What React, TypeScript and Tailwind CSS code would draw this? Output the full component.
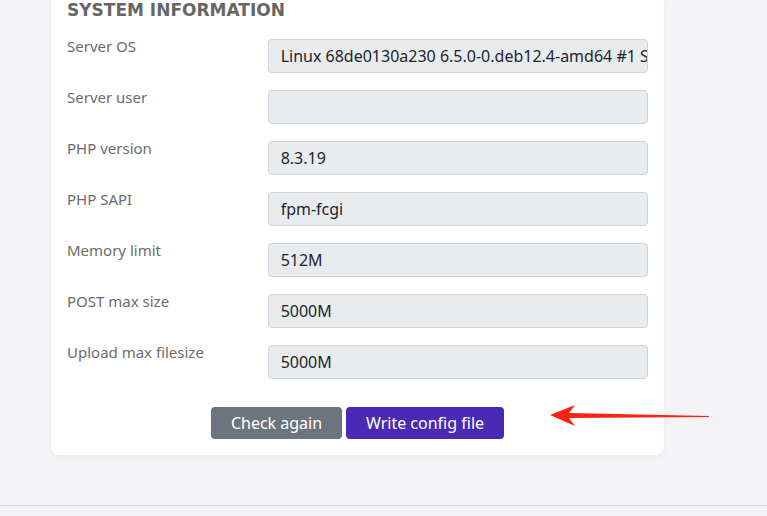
import React from 'react';

const rows: { label: string; value: string }[] = [
  { label: 'Server OS', value: 'Linux 68de0130a230 6.5.0-0.deb12.4-amd64 #1 SMP PREEMPT_DYNAMIC Debian' },
  { label: 'Server user', value: '' },
  { label: 'PHP version', value: '8.3.19' },
  { label: 'PHP SAPI', value: 'fpm-fcgi' },
  { label: 'Memory limit', value: '512M' },
  { label: 'POST max size', value: '5000M' },
  { label: 'Upload max filesize', value: '5000M' },
];

const App: React.FC = () => {
  return (
    <div className="h-[516px] w-[767px] overflow-hidden bg-[#f4f3f8] font-['Noto_Sans',sans-serif]">
      <div className="ml-[51px] w-[613px] rounded-b-lg bg-white px-4 pb-4 shadow-[0_2px_6px_rgba(0,0,0,0.04)]">
        <h2 className="font-['DejaVu_Sans',sans-serif] text-[17px] font-bold leading-[20px] text-[#666] uppercase">
          System information
        </h2>

        {/* Info rows */}
        <div className="mt-[19px] flex flex-col gap-[17px]">
          {rows.map((r) => (
            <div key={r.label} className="flex items-start">
              <div className="-mt-[3px] w-[201px] text-[15px] leading-[20px] text-[#6c6c6c]">
                {r.label}
              </div>
              <div className="h-[34px] w-[381px] overflow-hidden whitespace-nowrap rounded-[4px] border border-[#ced4da] bg-[#e9ecef] px-3 text-[16px] leading-[32px] text-[#212529]">
                {r.value}
              </div>
            </div>
          ))}
        </div>

        {/* Actions */}
        <div className="relative mt-[28px] flex justify-center gap-1">
          <button className="h-8 w-[131px] rounded-[4px] bg-[#6c757d] text-[16px] text-white">Check again</button>
          <button className="h-8 w-[158px] rounded-[4px] bg-[#4a2ab4] text-[16px] text-white">Write config file</button>
          <svg className="absolute left-[482px] top-[-2px]" width="162" height="22" viewBox="0 0 162 22">
            <path d="M1 10 L26 0 L20 8 L160 11 L160 12 L20 13 L26 21 Z" fill="#ff2015" />
          </svg>
        </div>
      </div>
      <div className="mt-[50px] border-t border-[#d9d8de]" />
    </div>
  );
};

export default App;
